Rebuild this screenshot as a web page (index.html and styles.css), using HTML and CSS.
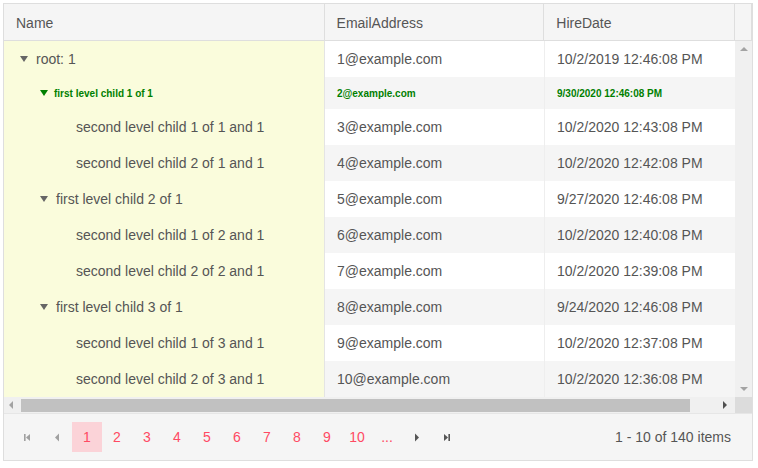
FILE: index.html
```
<!DOCTYPE html>
<html>
<head>
<meta charset="utf-8">
<link rel="stylesheet" href="styles.css">
</head>
<body>
<div class="grid">
  <div class="head">
    <div class="hc c-name">Name</div>
    <div class="hc c-email">EmailAddress</div>
    <div class="hc c-date">HireDate</div>
    <div class="hc c-sb"></div>
  </div>
  <div class="body">
    <div class="rows">
      <div class="row">
        <div class="cell c-name lvl0"><span class="tri"></span>root: 1</div>
        <div class="cell c-email">1@example.com</div>
        <div class="cell c-date">10/2/2019 12:46:08 PM</div>
      </div>
      <div class="row alt hl">
        <div class="cell c-name lvl1"><span class="tri green"></span>first level child 1 of 1</div>
        <div class="cell c-email">2@example.com</div>
        <div class="cell c-date">9/30/2020 12:46:08 PM</div>
      </div>
      <div class="row">
        <div class="cell c-name lvl2">second level child 1 of 1 and 1</div>
        <div class="cell c-email">3@example.com</div>
        <div class="cell c-date">10/2/2020 12:43:08 PM</div>
      </div>
      <div class="row alt">
        <div class="cell c-name lvl2">second level child 2 of 1 and 1</div>
        <div class="cell c-email">4@example.com</div>
        <div class="cell c-date">10/2/2020 12:42:08 PM</div>
      </div>
      <div class="row">
        <div class="cell c-name lvl1"><span class="tri"></span>first level child 2 of 1</div>
        <div class="cell c-email">5@example.com</div>
        <div class="cell c-date">9/27/2020 12:46:08 PM</div>
      </div>
      <div class="row alt">
        <div class="cell c-name lvl2">second level child 1 of 2 and 1</div>
        <div class="cell c-email">6@example.com</div>
        <div class="cell c-date">10/2/2020 12:40:08 PM</div>
      </div>
      <div class="row">
        <div class="cell c-name lvl2">second level child 2 of 2 and 1</div>
        <div class="cell c-email">7@example.com</div>
        <div class="cell c-date">10/2/2020 12:39:08 PM</div>
      </div>
      <div class="row alt">
        <div class="cell c-name lvl1"><span class="tri"></span>first level child 3 of 1</div>
        <div class="cell c-email">8@example.com</div>
        <div class="cell c-date">9/24/2020 12:46:08 PM</div>
      </div>
      <div class="row">
        <div class="cell c-name lvl2">second level child 1 of 3 and 1</div>
        <div class="cell c-email">9@example.com</div>
        <div class="cell c-date">10/2/2020 12:37:08 PM</div>
      </div>
      <div class="row alt">
        <div class="cell c-name lvl2">second level child 2 of 3 and 1</div>
        <div class="cell c-email">10@example.com</div>
        <div class="cell c-date">10/2/2020 12:36:08 PM</div>
      </div>
    </div>
    <div class="vscroll">
      <span class="arr up"></span>
      <span class="arr down"></span>
    </div>
  </div>
  <div class="hscroll">
    <div class="htrack">
      <span class="arr left"></span>
      <div class="thumb"></div>
      <span class="arr right"></span>
    </div>
    <div class="corner"></div>
  </div>
  <div class="pager">
    <div class="pages">
      <span class="pb"><svg width="8" height="9" viewBox="0 0 8 9"><rect x="1" y="1" width="1.6" height="7" fill="#a0a0a0"/><path d="M7 1 L3 4.5 L7 8 Z" fill="#a0a0a0"/></svg></span>
      <span class="pb"><svg width="8" height="9" viewBox="0 0 8 9"><path d="M6 0.5 L2 4.5 L6 8.5 Z" fill="#a0a0a0"/></svg></span>
      <span class="pn sel">1</span>
      <span class="pn">2</span>
      <span class="pn">3</span>
      <span class="pn">4</span>
      <span class="pn">5</span>
      <span class="pn">6</span>
      <span class="pn">7</span>
      <span class="pn">8</span>
      <span class="pn">9</span>
      <span class="pn">10</span>
      <span class="pn dots">...</span>
      <span class="pb"><svg width="8" height="9" viewBox="0 0 8 9"><path d="M2 0.5 L6 4.5 L2 8.5 Z" fill="#555"/></svg></span>
      <span class="pb"><svg width="8" height="9" viewBox="0 0 8 9"><path d="M1 1 L5 4.5 L1 8 Z" fill="#555"/><rect x="5.4" y="1" width="1.6" height="7" fill="#555"/></svg></span>
    </div>
    <div class="info">1 - 10 of 140 items</div>
  </div>
</div>
</body>
</html>
```

FILE: styles.css
```
* { box-sizing: border-box; }
html, body { margin: 0; padding: 0; background: #fff; }
body {
  font-family: "Liberation Sans", Arial, sans-serif;
  font-size: 14px;
  color: #555;
  padding: 3px 0 0 3px;
}
.grid {
  width: 750px;
  border: 1px solid #dedede;
  background: #fff;
}
.head {
  display: flex;
  height: 37px;
  background: #f5f5f5;
  border-bottom: 1px solid #dedede;
}
.hc {
  display: flex;
  align-items: center;
  padding-left: 12px;
  padding-top: 1px;
  border-right: 1px solid #dedede;
  color: #555;
}
.c-name { width: 321px; }
.c-email { width: 220px; }
.c-date { width: 191px; }
.hc.c-sb { width: 17px; padding: 0; }
.body {
  display: flex;
  height: 356px;
  overflow: hidden;
}
.rows { width: 731px; }
.row {
  display: flex;
  height: 36px;
}
.row.hl { height: 32px; }
.cell {
  display: flex;
  align-items: center;
  padding-left: 12px;
  white-space: nowrap;
  overflow: hidden;
}
.cell.c-name {
  background: #fafcdc;
  border-right: 1px solid #e4e4e4;
}
.cell.c-email {
  border-right: 1px solid #eeeeee;
}
.cell.c-date { width: 190px; }
.row.alt .c-email, .row.alt .c-date { background: #f5f5f5; }
.lvl0 { padding-left: 16px !important; }
.lvl1 { padding-left: 36px !important; }
.lvl2 { padding-left: 72px !important; }
.tri {
  display: inline-block;
  width: 0; height: 0;
  border-left: 4px solid transparent;
  border-right: 4px solid transparent;
  border-top: 6px solid #666;
  margin: 0 8px 0 0;
}
.tri.green { border-top-color: #008000; margin-right: 6px; }
.row.hl .cell { font-size: 10px; font-weight: bold; color: #008000; }
.vscroll {
  width: 17px;
  background: #f0f0f0;
  display: flex;
  flex-direction: column;
  justify-content: space-between;
  align-items: center;
  padding: 6px 0;
}
.arr { display: block; width: 0; height: 0; }
.arr.up { border-left: 4px solid transparent; border-right: 4px solid transparent; border-bottom: 4px solid #a3a3a3; }
.arr.down { border-left: 4px solid transparent; border-right: 4px solid transparent; border-top: 4px solid #a3a3a3; }
.hscroll {
  display: flex;
  height: 17px;
  border-bottom: 1px solid #e6e6e6;
}
.htrack {
  width: 731px;
  background: #f0f0f0;
  display: flex;
  align-items: center;
  padding: 0 0 0 5px;
}
.arr.left { border-top: 4px solid transparent; border-bottom: 4px solid transparent; border-right: 4px solid #a3a3a3; }
.arr.right { border-top: 4px solid transparent; border-bottom: 4px solid transparent; border-left: 4px solid #505050; margin-left: 33px; }
.thumb {
  width: 669px;
  height: 13px;
  background: #c1c1c1;
  margin-left: 8px;
}
.corner { width: 17px; background: #dcdcdc; }
.pager {
  display: flex;
  align-items: center;
  justify-content: space-between;
  height: 46px;
  background: #f5f5f5;
  padding: 0 21px 0 8px;
}
.pages { display: flex; align-items: center; }
.pb, .pn {
  width: 30px;
  height: 30px;
  display: flex;
  align-items: center;
  justify-content: center;
}
.pn { color: #ff4a63; font-size: 14px; }
.pn.sel { background: #fbd3d8; }
.pn.dots { color: #ff4a63; }
.info { color: #555; }
```
